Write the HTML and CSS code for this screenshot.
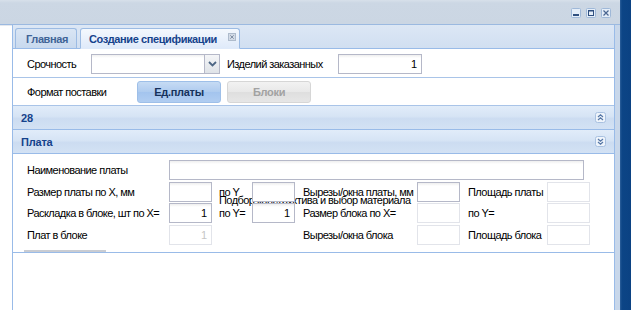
FILE: index.html
```html
<!DOCTYPE html>
<html lang="ru">
<head>
<meta charset="utf-8">
<title>Создание спецификации</title>
<link rel="stylesheet" href="styles.css">
</head>
<body>
<div class="screen">
  <div class="window">
    <div class="titlebar">
      <div class="wtools">
        <span class="wbtn"><svg width="10" height="10" viewBox="0 0 10 10"><rect x="0.5" y="0.5" width="9" height="9" rx="1" fill="#e4edf8" stroke="#9fb8d8"/><rect x="2" y="6" width="6" height="2" fill="#2f4f7f"/></svg></span>
        <span class="wbtn"><svg width="10" height="10" viewBox="0 0 10 10"><rect x="0.5" y="0.5" width="9" height="9" rx="1" fill="#e4edf8" stroke="#9fb8d8"/><rect x="2.5" y="2.5" width="5" height="5" fill="none" stroke="#2f4f7f"/><rect x="2" y="2" width="6" height="1.5" fill="#2f4f7f"/></svg></span>
        <span class="wbtn"><svg width="10" height="10" viewBox="0 0 10 10"><rect x="0.5" y="0.5" width="9" height="9" rx="1" fill="#e4edf8" stroke="#9fb8d8"/><path d="M2.5 2.5 L7.5 7.5 M7.5 2.5 L2.5 7.5" stroke="#4a6590" stroke-width="1.2"/></svg></span>
      </div>
    </div>
    <div class="workspace">
      <div class="gutter"></div>
      <div class="panel">
        <div class="tabstrip">
          <div class="tab">Главная</div>
          <div class="tab active">Создание спецификации<span class="tab-close"><svg width="8" height="8" viewBox="0 0 8 8"><rect x="0.5" y="0.5" width="7" height="7" fill="#d3dbe6" stroke="#aebbcc"/><path d="M2.3 2.3 L5.7 5.7 M5.7 2.3 L2.3 5.7" stroke="#8391a5" stroke-width="1"/></svg></span></div>
        </div>
        <div class="content">
          <div class="row row-top">
            <span class="lbl lbl-urg">Срочность</span>
            <div class="combo"><div class="combo-field"></div><div class="combo-btn"><svg width="9" height="6" viewBox="0 0 9 6"><path d="M1 1 L4.5 4.5 L8 1" fill="none" stroke="#4d6684" stroke-width="1.8"/></svg></div></div>
            <span class="lbl lbl-qty">Изделий заказанных</span>
            <div class="field field-qty">1</div>
          </div>
          <div class="row row-fmt">
            <span class="lbl lbl-fmt">Формат поставки</span>
            <div class="btn btn-on">Ед.платы</div>
            <div class="btn btn-off">Блоки</div>
          </div>
          <div class="phead"><span>28</span><span class="ptool"><svg width="11" height="11" viewBox="0 0 11 11"><rect x="0.5" y="0.5" width="10" height="10" rx="2" fill="#eef4fb" stroke="#a9c1e0"/><path d="M3 5 L5.5 2.8 L8 5 M3 8 L5.5 5.8 L8 8" fill="none" stroke="#5677a6" stroke-width="1.2"/></svg></span></div>
          <div class="phead"><span>Плата</span><span class="ptool"><svg width="11" height="11" viewBox="0 0 11 11"><rect x="0.5" y="0.5" width="10" height="10" rx="2" fill="#eef4fb" stroke="#a9c1e0"/><path d="M3 3 L5.5 5.2 L8 3 M3 6 L5.5 8.2 L8 6" fill="none" stroke="#5677a6" stroke-width="1.2"/></svg></span></div>
          <div class="section">
            <span class="over-lbl">Подбор конструктива и выбор материала</span>
            <div class="grid">
              <span class="lbl">Наименование платы</span>
              <div class="field field-name"></div>

              <span class="lbl">Размер платы по X, мм</span>
              <div class="field"></div>
              <span class="lbl">по Y</span>
              <div class="field"></div>
              <span class="lbl">Вырезы/окна платы, мм</span>
              <div class="field"></div>
              <span class="lbl">Площадь платы</span>
              <div class="field off"></div>

              <span class="lbl">Раскладка в блоке, шт по X=</span>
              <div class="field">1</div>
              <span class="lbl">по Y=</span>
              <div class="field">1</div>
              <span class="lbl">Размер блока по X=</span>
              <div class="field off"></div>
              <span class="lbl">по Y=</span>
              <div class="field off"></div>

              <span class="lbl">Плат в блоке</span>
              <div class="field off">1</div>
              <span class="lbl"></span>
              <span></span>
              <span class="lbl">Вырезы/окна блока</span>
              <div class="field off"></div>
              <span class="lbl">Площадь блока</span>
              <div class="field off"></div>
            </div>
            <div class="scrollmark"></div>
          </div>
          <div class="rest"></div>
        </div>
      </div>
      <div class="frame"></div>
    </div>
  </div>
  <div class="edge"></div>
</div>
</body>
</html>
```

FILE: styles.css
```css
* { box-sizing: border-box; }
html, body { margin: 0; padding: 0; background: #fff; }
body {
  width: 631px; height: 310px; overflow: hidden;
  font-family: "Liberation Sans", Arial, sans-serif;
  font-size: 11px; color: #000;
}
.screen { display: flex; width: 631px; height: 310px; }
.window { width: 620px; display: flex; flex-direction: column; }
.edge { flex: 1; background: linear-gradient(90deg, #2c5f9a 0, #0c4586 2px, #0b4283 100%); }

.titlebar {
  height: 25px;
  background: linear-gradient(#d7e0ea, #ccd7e4 3px, #cbd6e3);
  border-bottom: 1px solid #9bb9e0;
  display: flex; justify-content: flex-end; align-items: flex-start;
  padding-top: 8px; padding-right: 9px;
}
.wtools { display: flex; gap: 5px; }
.wbtn { display: block; width: 10px; height: 10px; }
.wbtn svg { display: block; }

.workspace { flex: 1; display: flex; }
.gutter { width: 12px; background: #fff; border-top: 1px solid #e4e8ee; }
.panel {
  width: 603px; display: flex; flex-direction: column;
  border-left: 1px solid #99bbe8; border-right: 1px solid #99bbe8;
}
.frame { width: 5px; background: #c8d7ea; }

.tabstrip {
  height: 24px; display: flex; align-items: flex-end; gap: 3px;
  padding-left: 2px;
  background: linear-gradient(#dce7f5, #d1dff1);
  border-bottom: 1px solid #99bbe8;
}
.tab {
  height: 21px; margin-bottom: -1px;
  padding: 0 8px 0 10px;
  display: flex; align-items: center;
  font-weight: bold; letter-spacing: -0.4px;
  color: #3f6497;
  background: linear-gradient(#d9e5f4, #c8d9ee);
  border: 1px solid #9cbbe3; border-bottom: 1px solid #99bbe8;
  border-radius: 3px 3px 0 0;
}
.tab.active {
  color: #15428b;
  background: linear-gradient(#f4f8fd, #dfeafa);
  border-bottom-color: #dfeafa;
  padding: 0 3px 0 8px;
  width: 160px;
}
.tab-close { margin-left: auto; margin-top: -4px; display: block; width: 8px; height: 8px; }
.tab-close svg { display: block; }

.content { flex: 1; display: flex; flex-direction: column; background: #fff; }

.row { display: flex; align-items: center; padding-left: 14px; border-bottom: 1px solid #a9c4e8; }
.row-top { height: 29px; padding-top: 1px; }
.row-fmt { height: 28px; padding-top: 0; }
.lbl { letter-spacing: -0.55px; white-space: nowrap; }
.lbl-urg { width: 64px; }
.lbl-qty { width: 111px; margin-left: 7px; }
.lbl-fmt { width: 110px; }

.combo { display: flex; width: 129px; height: 20px; }
.combo-field { flex: 1; border: 1px solid #b5b8c8; border-right: 0; background: linear-gradient(#f0f0f0, #fff 3px); }
.combo-btn {
  width: 16px; border: 1px solid #b5b8c8;
  background: linear-gradient(#f4f5f7, #dfe3e8);
  display: flex; align-items: center; justify-content: center;
}
.combo-btn svg { display: block; }

.field {
  width: 43px; height: 20px;
  border: 1px solid #b5b8c8;
  background: linear-gradient(#eeeeee, #fff 3px);
  text-align: right; padding: 0 4px; line-height: 18px;
  font-size: 11px;
}
.field.off { border-color: #e2e4ea; background: #fff; color: #c6c6c6; }
.field-qty { width: 84px; }
.field-name { width: 415px; grid-column: 2 / span 7; }

.btn {
  width: 84px; height: 22px; border-radius: 3px;
  display: flex; align-items: center; justify-content: center;
  font-weight: bold; letter-spacing: -0.3px;
}
.btn-on {
  color: #16325c;
  background: linear-gradient(#c6dbf4, #aecbef 50%, #a3c4ee 50%, #b0cdf1);
  border: 1px solid #9ebfe8;
}
.btn-off {
  margin-left: 6px; color: #a2a2a2;
  background: linear-gradient(#f2f2f2, #e8e8e8 50%, #dedede 50%, #e6e6e6);
  border: 1px solid #d6d6d6;
}

.phead {
  height: 24px; display: flex; align-items: center; justify-content: space-between;
  padding: 0 8px 0 8px;
  font-weight: bold; color: #15428b; letter-spacing: -0.2px;
  background: linear-gradient(#e1ecf9, #d6e4f5 45%, #ccdcf1 55%, #d3e2f4);
  border-bottom: 1px solid #99bbe8;
}
.ptool { display: block; width: 11px; height: 11px; }
.ptool svg { display: block; }

.section { position: relative; padding: 6px 0 7px 14px; border-bottom: 1px solid #99bbe8; }
.grid {
  display: grid;
  grid-template-columns: 142px 50px 33px 51px 114px 51px 79px 43px;
  grid-auto-rows: 20px;
  row-gap: 1.7px;
  align-items: center;
  position: relative; z-index: 1;
}
.over-lbl {
  position: absolute; left: 206px; top: 40px;
  letter-spacing: -0.55px; white-space: nowrap; z-index: 0;
}
.scrollmark {
  position: absolute; left: 11px; bottom: 0; width: 82px; height: 2px;
  background: #c9ccd2;
}
.rest { flex: 1; background: #fff; }
```
